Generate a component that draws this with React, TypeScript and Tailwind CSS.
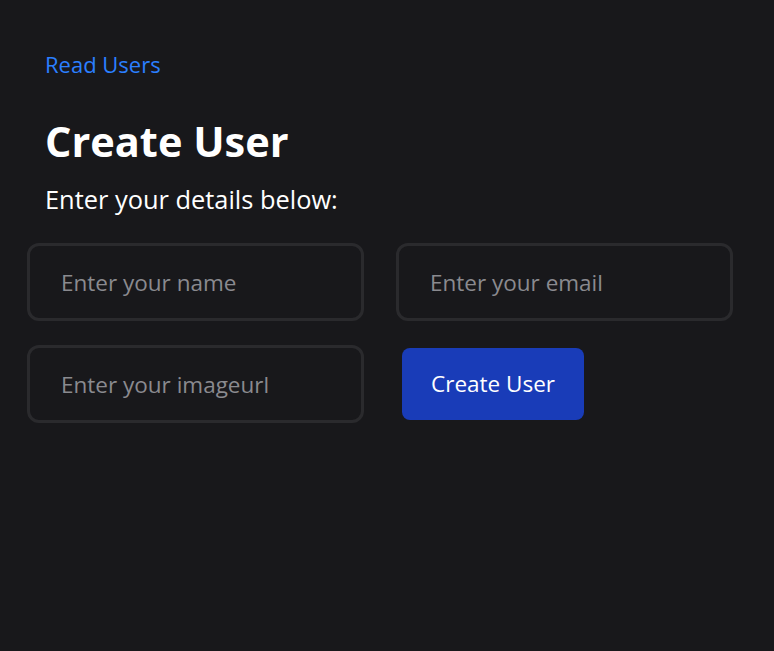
import React, { useState } from "react";

const App: React.FC = () => {
    const [formData, setFormData] = useState({ name: "", email: "", imageurl: "" });

    const handleChange = (e: React.ChangeEvent<HTMLInputElement>) => {
        const { name, value } = e.target;
        setFormData((prev) => ({ ...prev, [name]: value }));
    };

    const inputClass =
        "w-[337px] h-[78px] rounded-xl border-[3px] border-[#2a2a2d] bg-[#18181b] pl-[31px] text-[22.5px] text-white placeholder:text-[#8a8a8f] outline-none";

    return (
        <div
            className="min-h-screen bg-[#18181b] px-[45px] pt-[50px]"
            style={{ fontFamily: '"Segoe UI", "Open Sans", sans-serif' }}
        >
            <a href="#" className="block text-[22px] leading-[28px] text-[#2b7fff]">
                Read Users
            </a>
            <h1 className="mt-[35px] text-[41.5px] leading-[56px] font-bold text-white">Create User</h1>
            <p className="mt-[14px] text-[25.4px] leading-[32px] text-white">Enter your details below:</p>

            <form
                className="-ml-[18px] mt-[28px] grid grid-cols-[337px_337px] gap-x-[32px] gap-y-[24px]"
                onSubmit={(e) => e.preventDefault()}
            >
                <input
                    type="text"
                    name="name"
                    value={formData.name}
                    onChange={handleChange}
                    placeholder="Enter your name"
                    className={inputClass}
                />
                <input
                    type="email"
                    name="email"
                    value={formData.email}
                    onChange={handleChange}
                    placeholder="Enter your email"
                    className={inputClass}
                />
                <input
                    type="text"
                    name="imageurl"
                    value={formData.imageurl}
                    onChange={handleChange}
                    placeholder="Enter your imageurl"
                    className={inputClass}
                />
                <button
                    type="submit"
                    className="ml-[6px] self-center w-[182px] h-[72px] rounded-lg bg-[#193cb8] text-[22.5px] text-white"
                >
                    Create User
                </button>
            </form>
        </div>
    );
};

export default App;
